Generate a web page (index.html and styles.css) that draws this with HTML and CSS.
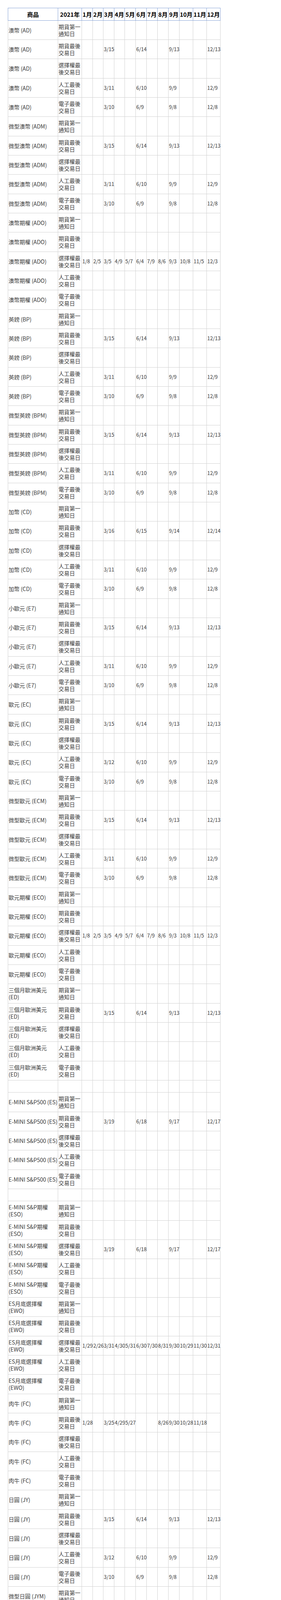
FILE: index.html
```html
<!DOCTYPE html>
<html lang="zh-Hant">
<head>
<meta charset="utf-8">
<title>2021 商品到期日</title>
<link rel="stylesheet" href="styles.css">
</head>
<body>
<div class="page">
<table class="cal">
<colgroup><col class="c-name"><col class="c-type"><col class="c-m"><col class="c-s"><col class="c-m"><col class="c-s"><col class="c-m"><col class="c-m"><col class="c-m"><col class="c-m"><col class="c-m"><col class="c-w"><col class="c-w"><col class="c-w"></colgroup>
<thead><tr><th>商品</th><th>2021年</th><th>1月</th><th>2月</th><th>3月</th><th>4月</th><th>5月</th><th>6月</th><th>7月</th><th>8月</th><th>9月</th><th>10月</th><th>11月</th><th>12月</th></tr></thead>
<tbody>
<tr><td>澳幣 (AD)<td>期貨第一通知日<td><td><td><td><td><td><td><td><td><td><td><td>
<tr><td>澳幣 (AD)<td>期貨最後交易日<td><td><td>3/15<td><td><td>6/14<td><td><td>9/13<td><td><td>12/13
<tr><td>澳幣 (AD)<td>選擇權最後交易日<td><td><td><td><td><td><td><td><td><td><td><td>
<tr><td>澳幣 (AD)<td>人工最後交易日<td><td><td>3/11<td><td><td>6/10<td><td><td>9/9<td><td><td>12/9
<tr><td>澳幣 (AD)<td>電子最後交易日<td><td><td>3/10<td><td><td>6/9<td><td><td>9/8<td><td><td>12/8
<tr><td>微型澳幣 (ADM)<td>期貨第一通知日<td><td><td><td><td><td><td><td><td><td><td><td>
<tr><td>微型澳幣 (ADM)<td>期貨最後交易日<td><td><td>3/15<td><td><td>6/14<td><td><td>9/13<td><td><td>12/13
<tr><td>微型澳幣 (ADM)<td>選擇權最後交易日<td><td><td><td><td><td><td><td><td><td><td><td>
<tr><td>微型澳幣 (ADM)<td>人工最後交易日<td><td><td>3/11<td><td><td>6/10<td><td><td>9/9<td><td><td>12/9
<tr><td>微型澳幣 (ADM)<td>電子最後交易日<td><td><td>3/10<td><td><td>6/9<td><td><td>9/8<td><td><td>12/8
<tr><td>澳幣期權 (ADO)<td>期貨第一通知日<td><td><td><td><td><td><td><td><td><td><td><td>
<tr><td>澳幣期權 (ADO)<td>期貨最後交易日<td><td><td><td><td><td><td><td><td><td><td><td>
<tr><td>澳幣期權 (ADO)<td>選擇權最後交易日<td>1/8<td>2/5<td>3/5<td>4/9<td>5/7<td>6/4<td>7/9<td>8/6<td>9/3<td>10/8<td>11/5<td>12/3
<tr><td>澳幣期權 (ADO)<td>人工最後交易日<td><td><td><td><td><td><td><td><td><td><td><td>
<tr><td>澳幣期權 (ADO)<td>電子最後交易日<td><td><td><td><td><td><td><td><td><td><td><td>
<tr><td>英鎊 (BP)<td>期貨第一通知日<td><td><td><td><td><td><td><td><td><td><td><td>
<tr><td>英鎊 (BP)<td>期貨最後交易日<td><td><td>3/15<td><td><td>6/14<td><td><td>9/13<td><td><td>12/13
<tr><td>英鎊 (BP)<td>選擇權最後交易日<td><td><td><td><td><td><td><td><td><td><td><td>
<tr><td>英鎊 (BP)<td>人工最後交易日<td><td><td>3/11<td><td><td>6/10<td><td><td>9/9<td><td><td>12/9
<tr><td>英鎊 (BP)<td>電子最後交易日<td><td><td>3/10<td><td><td>6/9<td><td><td>9/8<td><td><td>12/8
<tr><td>微型英鎊 (BPM)<td>期貨第一通知日<td><td><td><td><td><td><td><td><td><td><td><td>
<tr><td>微型英鎊 (BPM)<td>期貨最後交易日<td><td><td>3/15<td><td><td>6/14<td><td><td>9/13<td><td><td>12/13
<tr><td>微型英鎊 (BPM)<td>選擇權最後交易日<td><td><td><td><td><td><td><td><td><td><td><td>
<tr><td>微型英鎊 (BPM)<td>人工最後交易日<td><td><td>3/11<td><td><td>6/10<td><td><td>9/9<td><td><td>12/9
<tr><td>微型英鎊 (BPM)<td>電子最後交易日<td><td><td>3/10<td><td><td>6/9<td><td><td>9/8<td><td><td>12/8
<tr><td>加幣 (CD)<td>期貨第一通知日<td><td><td><td><td><td><td><td><td><td><td><td>
<tr><td>加幣 (CD)<td>期貨最後交易日<td><td><td>3/16<td><td><td>6/15<td><td><td>9/14<td><td><td>12/14
<tr><td>加幣 (CD)<td>選擇權最後交易日<td><td><td><td><td><td><td><td><td><td><td><td>
<tr><td>加幣 (CD)<td>人工最後交易日<td><td><td>3/11<td><td><td>6/10<td><td><td>9/9<td><td><td>12/9
<tr><td>加幣 (CD)<td>電子最後交易日<td><td><td>3/10<td><td><td>6/9<td><td><td>9/8<td><td><td>12/8
<tr><td>小歐元 (E7)<td>期貨第一通知日<td><td><td><td><td><td><td><td><td><td><td><td>
<tr><td>小歐元 (E7)<td>期貨最後交易日<td><td><td>3/15<td><td><td>6/14<td><td><td>9/13<td><td><td>12/13
<tr><td>小歐元 (E7)<td>選擇權最後交易日<td><td><td><td><td><td><td><td><td><td><td><td>
<tr><td>小歐元 (E7)<td>人工最後交易日<td><td><td>3/11<td><td><td>6/10<td><td><td>9/9<td><td><td>12/9
<tr><td>小歐元 (E7)<td>電子最後交易日<td><td><td>3/10<td><td><td>6/9<td><td><td>9/8<td><td><td>12/8
<tr><td>歐元 (EC)<td>期貨第一通知日<td><td><td><td><td><td><td><td><td><td><td><td>
<tr><td>歐元 (EC)<td>期貨最後交易日<td><td><td>3/15<td><td><td>6/14<td><td><td>9/13<td><td><td>12/13
<tr><td>歐元 (EC)<td>選擇權最後交易日<td><td><td><td><td><td><td><td><td><td><td><td>
<tr><td>歐元 (EC)<td>人工最後交易日<td><td><td>3/12<td><td><td>6/10<td><td><td>9/9<td><td><td>12/9
<tr><td>歐元 (EC)<td>電子最後交易日<td><td><td>3/10<td><td><td>6/9<td><td><td>9/8<td><td><td>12/8
<tr><td>微型歐元 (ECM)<td>期貨第一通知日<td><td><td><td><td><td><td><td><td><td><td><td>
<tr><td>微型歐元 (ECM)<td>期貨最後交易日<td><td><td>3/15<td><td><td>6/14<td><td><td>9/13<td><td><td>12/13
<tr><td>微型歐元 (ECM)<td>選擇權最後交易日<td><td><td><td><td><td><td><td><td><td><td><td>
<tr><td>微型歐元 (ECM)<td>人工最後交易日<td><td><td>3/11<td><td><td>6/10<td><td><td>9/9<td><td><td>12/9
<tr><td>微型歐元 (ECM)<td>電子最後交易日<td><td><td>3/10<td><td><td>6/9<td><td><td>9/8<td><td><td>12/8
<tr><td>歐元期權 (ECO)<td>期貨第一通知日<td><td><td><td><td><td><td><td><td><td><td><td>
<tr><td>歐元期權 (ECO)<td>期貨最後交易日<td><td><td><td><td><td><td><td><td><td><td><td>
<tr><td>歐元期權 (ECO)<td>選擇權最後交易日<td>1/8<td>2/5<td>3/5<td>4/9<td>5/7<td>6/4<td>7/9<td>8/6<td>9/3<td>10/8<td>11/5<td>12/3
<tr><td>歐元期權 (ECO)<td>人工最後交易日<td><td><td><td><td><td><td><td><td><td><td><td>
<tr><td>歐元期權 (ECO)<td>電子最後交易日<td><td><td><td><td><td><td><td><td><td><td><td>
<tr><td>三個月歐洲美元<br>(ED)<td>期貨第一通知日<td><td><td><td><td><td><td><td><td><td><td><td>
<tr><td>三個月歐洲美元<br>(ED)<td>期貨最後交易日<td><td><td>3/15<td><td><td>6/14<td><td><td>9/13<td><td><td>12/13
<tr><td>三個月歐洲美元<br>(ED)<td>選擇權最後交易日<td><td><td><td><td><td><td><td><td><td><td><td>
<tr><td>三個月歐洲美元<br>(ED)<td>人工最後交易日<td><td><td><td><td><td><td><td><td><td><td><td>
<tr><td>三個月歐洲美元<br>(ED)<td>電子最後交易日<td><td><td><td><td><td><td><td><td><td><td><td>
<tr class="blank"><td>&nbsp;<td><td><td><td><td><td><td><td><td><td><td><td><td><td>
<tr><td>E-MINI S&amp;P500 (ES)<td>期貨第一通知日<td><td><td><td><td><td><td><td><td><td><td><td>
<tr><td>E-MINI S&amp;P500 (ES)<td>期貨最後交易日<td><td><td>3/19<td><td><td>6/18<td><td><td>9/17<td><td><td>12/17
<tr><td>E-MINI S&amp;P500 (ES)<td>選擇權最後交易日<td><td><td><td><td><td><td><td><td><td><td><td>
<tr><td>E-MINI S&amp;P500 (ES)<td>人工最後交易日<td><td><td><td><td><td><td><td><td><td><td><td>
<tr><td>E-MINI S&amp;P500 (ES)<td>電子最後交易日<td><td><td><td><td><td><td><td><td><td><td><td>
<tr class="blank"><td>&nbsp;<td><td><td><td><td><td><td><td><td><td><td><td><td><td>
<tr><td>E-MINI S&amp;P期權<br>(ESO)<td>期貨第一通知日<td><td><td><td><td><td><td><td><td><td><td><td>
<tr><td>E-MINI S&amp;P期權<br>(ESO)<td>期貨最後交易日<td><td><td><td><td><td><td><td><td><td><td><td>
<tr><td>E-MINI S&amp;P期權<br>(ESO)<td>選擇權最後交易日<td><td><td>3/19<td><td><td>6/18<td><td><td>9/17<td><td><td>12/17
<tr><td>E-MINI S&amp;P期權<br>(ESO)<td>人工最後交易日<td><td><td><td><td><td><td><td><td><td><td><td>
<tr><td>E-MINI S&amp;P期權<br>(ESO)<td>電子最後交易日<td><td><td><td><td><td><td><td><td><td><td><td>
<tr><td>ES月底選擇權<br>(EWO)<td>期貨第一通知日<td><td><td><td><td><td><td><td><td><td><td><td>
<tr><td>ES月底選擇權<br>(EWO)<td>期貨最後交易日<td><td><td><td><td><td><td><td><td><td><td><td>
<tr><td>ES月底選擇權<br>(EWO)<td>選擇權最後交易日<td>1/29<td>2/26<td>3/31<td>4/30<td>5/31<td>6/30<td>7/30<td>8/31<td>9/30<td>10/29<td>11/30<td>12/31
<tr><td>ES月底選擇權<br>(EWO)<td>人工最後交易日<td><td><td><td><td><td><td><td><td><td><td><td>
<tr><td>ES月底選擇權<br>(EWO)<td>電子最後交易日<td><td><td><td><td><td><td><td><td><td><td><td>
<tr><td>肉牛 (FC)<td>期貨第一通知日<td><td><td><td><td><td><td><td><td><td><td><td>
<tr><td>肉牛 (FC)<td>期貨最後交易日<td>1/28<td><td>3/25<td>4/29<td>5/27<td><td><td>8/26<td>9/30<td>10/28<td>11/18<td>
<tr><td>肉牛 (FC)<td>選擇權最後交易日<td><td><td><td><td><td><td><td><td><td><td><td>
<tr><td>肉牛 (FC)<td>人工最後交易日<td><td><td><td><td><td><td><td><td><td><td><td>
<tr><td>肉牛 (FC)<td>電子最後交易日<td><td><td><td><td><td><td><td><td><td><td><td>
<tr><td>日圓 (JY)<td>期貨第一通知日<td><td><td><td><td><td><td><td><td><td><td><td>
<tr><td>日圓 (JY)<td>期貨最後交易日<td><td><td>3/15<td><td><td>6/14<td><td><td>9/13<td><td><td>12/13
<tr><td>日圓 (JY)<td>選擇權最後交易日<td><td><td><td><td><td><td><td><td><td><td><td>
<tr><td>日圓 (JY)<td>人工最後交易日<td><td><td>3/12<td><td><td>6/10<td><td><td>9/9<td><td><td>12/9
<tr><td>日圓 (JY)<td>電子最後交易日<td><td><td>3/10<td><td><td>6/9<td><td><td>9/8<td><td><td>12/8
<tr><td>微型日圓 (JYM)<td>期貨第一通知日<td><td><td><td><td><td><td><td><td><td><td><td>
<tr><td>微型日圓 (JYM)<td>期貨最後交易日<td><td><td>3/15<td><td><td>6/14<td><td><td>9/13<td><td><td>12/13
<tr><td>微型日圓 (JYM)<td>選擇權最後交易日<td><td><td><td><td><td><td><td><td><td><td><td>
<tr><td>微型日圓 (JYM)<td>人工最後交易日<td><td><td>3/11<td><td><td>6/10<td><td><td>9/9<td><td><td>12/9
<tr><td>微型日圓 (JYM)<td>電子最後交易日<td><td><td>3/10<td><td><td>6/9<td><td><td>9/8<td><td><td>12/8
<tr><td>日元期權 (JYO)<td>期貨第一通知日<td><td><td><td><td><td><td><td><td><td><td><td>
<tr><td>日元期權 (JYO)<td>期貨最後交易日<td><td><td><td><td><td><td><td><td><td><td><td>
<tr><td>日元期權 (JYO)<td>選擇權最後交易日<td>1/8<td>2/5<td>3/5<td>4/9<td>5/7<td>6/4<td>7/9<td>8/6<td>9/3<td>10/8<td>11/5<td>12/3
<tr><td>日元期權 (JYO)<td>人工最後交易日<td><td><td><td><td><td><td><td><td><td><td><td>
<tr><td>日元期權 (JYO)<td>電子最後交易日<td><td><td><td><td><td><td><td><td><td><td><td>
<tr><td>活牛 (LC)<td>期貨第一通知日<td><td>2/8<td><td>4/5<td><td>6/7<td><td>8/9<td><td>10/4<td><td>12/6
<tr><td>活牛 (LC)<td>期貨最後交易日<td><td>2/26<td><td>4/30<td><td>6/30<td><td>8/31<td><td>10/29<td><td>12/31
<tr><td>活牛 (LC)<td>選擇權最後交易日<td><td><td><td><td><td><td><td><td><td><td><td>
<tr><td>活牛 (LC)<td>人工最後交易日<td><td>2/4<td><td>4/1<td><td>6/3<td><td>8/5<td><td>9/30<td><td>12/2
<tr><td>活牛 (LC)<td>電子最後交易日<td><td>2/3<td><td>3/31<td><td>6/2<td><td>8/4<td><td>9/29<td><td>12/1
<tr><td>瘦肉豬 (LH)<td>期貨第一通知日<td><td><td><td><td><td><td><td><td><td><td><td>
<tr><td>瘦肉豬 (LH)<td>期貨最後交易日<td><td>2/12<td><td>4/15<td>5/14<td>6/14<td>7/15<td>8/13<td><td>10/14<td><td>12/14
<tr><td>瘦肉豬 (LH)<td>選擇權最後交易日<td><td><td><td><td><td><td><td><td><td><td><td>
<tr><td>瘦肉豬 (LH)<td>人工最後交易日<td><td><td><td><td><td><td><td><td><td><td><td>
<tr><td>瘦肉豬 (LH)<td>電子最後交易日<td><td><td><td><td><td><td><td><td><td><td><td>
<tr><td>微型羅素 (M2K)<td>期貨第一通知日<td><td><td><td><td><td><td><td><td><td><td><td>
<tr><td>微型羅素 (M2K)<td>期貨最後交易日<td><td><td>3/19<td><td><td>6/18<td><td><td>9/17<td><td><td>12/17
<tr><td>微型羅素 (M2K)<td>選擇權最後交易日<td><td><td><td><td><td><td><td><td><td><td><td>
<tr><td>微型羅素 (M2K)<td>人工最後交易日<td><td><td><td><td><td><td><td><td><td><td><td>
<tr><td>微型羅素 (M2K)<td>電子最後交易日<td><td><td><td><td><td><td><td><td><td><td><td>
<tr><td>微型 E-MINI S&amp;P500<br>Index (MES)<td>期貨第一通知日<td><td><td><td><td><td><td><td><td><td><td><td>
<tr><td>微型 E-MINI S&amp;P500<br>Index (MES)<td>期貨最後交易日<td><td><td>3/19<td><td><td>6/18<td><td><td>9/17<td><td><td>12/17
<tr><td>微型 E-MINI S&amp;P500<br>Index (MES)<td>選擇權最後交易日<td><td><td><td><td><td><td><td><td><td><td><td>
<tr><td>微型 E-MINI S&amp;P500<br>Index (MES)<td>人工最後交易日<td><td><td><td><td><td><td><td><td><td><td><td>
<tr><td>微型 E-MINI S&amp;P500<br>Index (MES)<td>電子最後交易日<td><td><td><td><td><td><td><td><td><td><td><td>
<tr><td>微型 E-MINI<br>NASDAQ 100 (MNQ)<td>期貨第一通知日<td><td><td><td><td><td><td><td><td><td><td><td>
<tr><td>微型 E-MINI<br>NASDAQ 100 (MNQ)<td>期貨最後交易日<td><td><td>3/19<td><td><td>6/18<td><td><td>9/17<td><td><td>12/17
<tr><td>微型 E-MINI<br>NASDAQ 100 (MNQ)<td>選擇權最後交易日<td><td><td><td><td><td><td><td><td><td><td><td>
<tr><td>微型 E-MINI<br>NASDAQ 100 (MNQ)<td>人工最後交易日<td><td><td><td><td><td><td><td><td><td><td><td>
<tr><td>微型 E-MINI<br>NASDAQ 100 (MNQ)<td>電子最後交易日<td><td><td><td><td><td><td><td><td><td><td><td>
<tr><td>墨西哥披索 (MP)<td>期貨第一通知日<td><td><td><td><td><td><td><td><td><td><td><td>
<tr><td>墨西哥披索 (MP)<td>期貨最後交易日<td><td><td>3/15<td><td><td>6/14<td><td><td>9/13<td><td><td>
<tr><td>墨西哥披索 (MP)<td>選擇權最後交易日<td><td><td><td><td><td><td><td><td><td><td><td>
<tr><td>墨西哥披索 (MP)<td>人工最後交易日<td><td><td>3/11<td><td><td>6/10<td><td><td><td><td><td>
<tr><td>墨西哥披索 (MP)<td>電子最後交易日<td><td><td>3/10<td><td><td><td><td><td><td><td><td>
<tr><td>紐西蘭幣 (NE)<td>期貨第一通知日<td><td><td><td><td><td><td><td><td><td><td><td>
<tr><td>紐西蘭幣 (NE)<td>期貨最後交易日<td><td><td>3/15<td><td><td>6/14<td><td><td>9/13<td><td><td>12/13
<tr><td>紐西蘭幣 (NE)<td>選擇權最後交易日<td><td><td><td><td><td><td><td><td><td><td><td>
<tr><td>紐西蘭幣 (NE)<td>人工最後交易日<td><td><td>3/11<td><td><td>6/10<td><td><td>9/9<td><td><td>12/9
<tr><td>紐西蘭幣 (NE)<td>電子最後交易日<td><td><td>3/10<td><td><td>6/9<td><td><td>9/8<td><td><td>12/8
<tr><td>日經225 (NK)<td>期貨第一通知日<td><td><td><td><td><td><td><td><td><td><td><td>
<tr><td>日經225 (NK)<td>期貨最後交易日<td><td><td><td><td><td><td><td><td><td><td><td>
<tr><td>日經225 (NK)<td>選擇權最後交易日<td><td><td><td><td><td><td><td><td><td><td><td>
<tr><td>日經225 (NK)<td>人工最後交易日<td><td><td><td><td><td><td><td><td><td><td><td>
<tr><td>日經225 (NK)<td>電子最後交易日<td><td><td><td><td><td><td><td><td><td><td><td>
<tr><td>MINI<br>–NASDAQ100 (NQ)<td>期貨第一通知日<td><td><td><td><td><td><td><td><td><td><td><td>
<tr><td>MINI<br>–NASDAQ100 (NQ)<td>期貨最後交易日<td><td><td>3/19<td><td><td>6/18<td><td><td>9/17<td><td><td>12/17
<tr><td>MINI<br>–NASDAQ100 (NQ)<td>選擇權最後交易日<td><td><td><td><td><td><td><td><td><td><td><td>
<tr><td>MINI<br>–NASDAQ100 (NQ)<td>人工最後交易日<td><td><td><td><td><td><td><td><td><td><td><td>
<tr><td>MINI<br>–NASDAQ100 (NQ)<td>電子最後交易日<td><td><td><td><td><td><td><td><td><td><td><td>
<tr><td>歐元/英鎊 (RP)<td>期貨第一通知日<td><td><td><td><td><td><td><td><td><td><td><td>
<tr><td>歐元/英鎊 (RP)<td>期貨最後交易日<td><td><td>3/15<td><td><td>6/18<td><td><td>9/13<td><td><td>
<tr><td>歐元/英鎊 (RP)<td>選擇權最後交易日<td><td><td><td><td><td><td><td><td><td><td><td>
<tr><td>歐元/英鎊 (RP)<td>人工最後交易日<td><td><td>3/11<td><td><td>6/10<td><td><td>9/9<td><td><td>12/9
<tr><td>歐元/英鎊 (RP)<td>電子最後交易日<td><td><td>3/10<td><td><td>6/9<td><td><td>9/8<td><td><td>12/8
<tr><td>小羅素2000 (RTY)<td>期貨第一通知日<td><td><td><td><td><td><td><td><td><td><td><td>
<tr><td>小羅素2000 (RTY)<td>期貨最後交易日<td><td><td>3/19<td><td><td>6/18<td><td><td>9/17<td><td><td>12/17
<tr><td>小羅素2000 (RTY)<td>選擇權最後交易日<td><td><td><td><td><td><td><td><td><td><td><td>
<tr><td>小羅素2000 (RTY)<td>人工最後交易日<td><td><td><td><td><td><td><td><td><td><td><td>
<tr><td>小羅素2000 (RTY)<td>電子最後交易日<td><td><td><td><td><td><td><td><td><td><td><td>
<tr><td>歐元/日幣 (RY)<td>期貨第一通知日<td><td><td><td><td><td><td><td><td><td><td><td>
<tr><td>歐元/日幣 (RY)<td>期貨最後交易日<td><td><td>3/15<td><td><td>6/14<td><td><td>9/13<td><td><td>12/13
<tr><td>歐元/日幣 (RY)<td>選擇權最後交易日<td><td><td><td><td><td><td><td><td><td><td><td>
<tr><td>歐元/日幣 (RY)<td>人工最後交易日<td><td><td>3/11<td><td><td>6/10<td><td><td>9/9<td><td><td>12/9
<tr><td>歐元/日幣 (RY)<td>電子最後交易日<td><td><td>3/10<td><td><td>6/9<td><td><td>9/8<td><td><td>12/8
<tr><td>瑞士法郎 (SF)<td>期貨第一通知日<td><td><td><td><td><td><td><td><td><td><td><td>
<tr><td>瑞士法郎 (SF)<td>期貨最後交易日<td><td><td>3/15<td><td><td>6/14<td><td><td>9/13<td><td><td>12/13
<tr><td>瑞士法郎 (SF)<td>選擇權最後交易日<td><td><td><td><td><td><td><td><td><td><td><td>
<tr><td>瑞士法郎 (SF)<td>人工最後交易日<td><td><td>3/11<td><td><td>6/10<td><td><td>9/9<td><td><td>12/9
<tr><td>瑞士法郎 (SF)<td>電子最後交易日<td><td><td>3/10<td><td><td>6/9<td><td><td>9/8<td><td><td>12/8
</tbody>
</table>
</div>
</body>
</html>
```

FILE: styles.css
```css
html, body {
  margin: 0;
  padding: 0;
  background: #ffffff;
}

body {
  font-family: "Noto Sans CJK TC", "Noto Sans", sans-serif;
}

.page {
  padding: 20px 0 0 20px;
}

.cal {
  border-collapse: collapse;
  table-layout: fixed;
  width: 544px;
  font-size: 14px;
  color: #3a3a3a;
}

.c-name { width: 128px; }
.c-type { width: 61px; }
.c-m { width: 28px; }
.c-s { width: 27px; }
.c-w { width: 35px; }

.cal th {
  border: 1px solid #86a3d6;
  padding: 6px 0;
  font-size: 15px;
  line-height: 19px;
  font-weight: bold;
  color: #000000;
  text-align: center;
  white-space: nowrap;
}

.cal td {
  border: 1px solid #d2d2d2;
  padding: 6px 0 6px 1px;
  line-height: 18px;
  text-align: left;
  vertical-align: middle;
}

.cal tbody tr:nth-child(3n) td {
  padding-bottom: 7px;
}

.cal td:first-child {
  white-space: nowrap;
}

.cal td:nth-child(n+3) {
  white-space: nowrap;
  font-size: 13px;
}
```
